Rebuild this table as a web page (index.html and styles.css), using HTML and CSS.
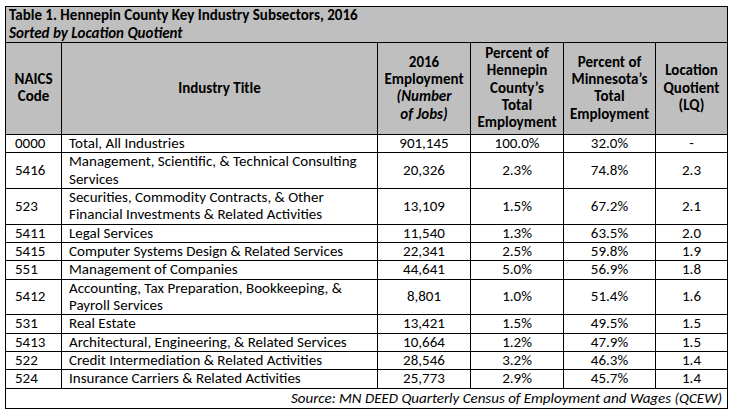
FILE: index.html
```html
<!DOCTYPE html>
<html lang="en">
<head>
<meta charset="utf-8">
<title>Table 1. Hennepin County Key Industry Subsectors, 2016</title>
<link rel="stylesheet" href="styles.css">
</head>
<body>
<div class="page">
<table class="data">
  <colgroup>
    <col class="c-code">
    <col class="c-title">
    <col class="c-emp">
    <col class="c-hen">
    <col class="c-mn">
    <col class="c-lq">
  </colgroup>
  <thead>
    <tr class="caption-row">
      <th colspan="6" class="caption">Table 1. Hennepin County Key Industry Subsectors, 2016<br><em>Sorted by Location Quotient</em></th>
    </tr>
    <tr class="head-row">
      <th>NAICS<br>Code</th>
      <th>Industry Title</th>
      <th>2016<br>Employment<br><em>(Number<br>of Jobs)</em></th>
      <th>Percent of<br>Hennepin<br>County’s<br>Total<br>Employment</th>
      <th>Percent of<br>Minnesota’s<br>Total<br>Employment</th>
      <th>Location<br>Quotient<br>(LQ)</th>
    </tr>
  </thead>
  <tbody>
    <tr><td class="code">0000</td><td class="title">Total, All Industries</td><td class="num">901,145</td><td class="num">100.0%</td><td class="num">32.0%</td><td class="num">-</td></tr>
    <tr><td class="code">5416</td><td class="title">Management, Scientific, &amp; Technical Consulting<br>Services</td><td class="num">20,326</td><td class="num">2.3%</td><td class="num">74.8%</td><td class="num">2.3</td></tr>
    <tr><td class="code">523</td><td class="title">Securities, Commodity Contracts, &amp; Other<br>Financial Investments &amp; Related Activities</td><td class="num">13,109</td><td class="num">1.5%</td><td class="num">67.2%</td><td class="num">2.1</td></tr>
    <tr><td class="code">5411</td><td class="title">Legal Services</td><td class="num">11,540</td><td class="num">1.3%</td><td class="num">63.5%</td><td class="num">2.0</td></tr>
    <tr><td class="code">5415</td><td class="title">Computer Systems Design &amp; Related Services</td><td class="num">22,341</td><td class="num">2.5%</td><td class="num">59.8%</td><td class="num">1.9</td></tr>
    <tr><td class="code">551</td><td class="title">Management of Companies</td><td class="num">44,641</td><td class="num">5.0%</td><td class="num">56.9%</td><td class="num">1.8</td></tr>
    <tr><td class="code">5412</td><td class="title">Accounting, Tax Preparation, Bookkeeping, &amp;<br>Payroll Services</td><td class="num">8,801</td><td class="num">1.0%</td><td class="num">51.4%</td><td class="num">1.6</td></tr>
    <tr><td class="code">531</td><td class="title">Real Estate</td><td class="num">13,421</td><td class="num">1.5%</td><td class="num">49.5%</td><td class="num">1.5</td></tr>
    <tr><td class="code">5413</td><td class="title">Architectural, Engineering, &amp; Related Services</td><td class="num">10,664</td><td class="num">1.2%</td><td class="num">47.9%</td><td class="num">1.5</td></tr>
    <tr><td class="code">522</td><td class="title">Credit Intermediation &amp; Related Activities</td><td class="num">28,546</td><td class="num">3.2%</td><td class="num">46.3%</td><td class="num">1.4</td></tr>
    <tr><td class="code">524</td><td class="title">Insurance Carriers &amp; Related Activities</td><td class="num">25,773</td><td class="num">2.9%</td><td class="num">45.7%</td><td class="num">1.4</td></tr>
  </tbody>
  <tfoot>
    <tr><td colspan="6" class="source">Source: MN DEED Quarterly Census of Employment and Wages (QCEW)</td></tr>
  </tfoot>
</table>
</div>
</body>
</html>
```
FILE: styles.css
```css
html, body {
  margin: 0;
  padding: 0;
  background: #ffffff;
}

.page {
  padding: 6px 0 0 5px;
  font-family: Carlito, Lato, "Noto Sans", sans-serif;
  font-size: 15px;
  color: #000000;
}

.data {
  border-collapse: collapse;
  table-layout: fixed;
  width: 722px;
  border: 1px solid #000;
}

.c-code { width: 56px; }
.c-title { width: 316px; }
.c-emp { width: 93px; }
.c-hen { width: 93px; }
.c-mn { width: 92px; }
.c-lq { width: 72px; }

.data th,
.data td {
  border: 1px solid #000;
  padding: 0;
  line-height: 17.36px;
  vertical-align: middle;
  white-space: nowrap;
}

.caption-row .caption {
  background: #bfbfbf;
  text-align: left;
  padding: 0 3px;
  font-weight: 700;
  line-height: 17.5px;
}

.caption em {
  font-style: italic;
}

.head-row th {
  background: #bfbfbf;
  font-weight: 700;
  text-align: center;
  padding: 2px 2px;
}

.head-row th em {
  font-style: italic;
}

.code {
  text-align: left;
  padding-left: 9px !important;
}

.title {
  text-align: left;
  padding-left: 7px !important;
}

.num {
  text-align: center;
}

.source {
  text-align: right;
  font-style: italic;
  padding: 1px 5px 1px 0 !important;
}
```
